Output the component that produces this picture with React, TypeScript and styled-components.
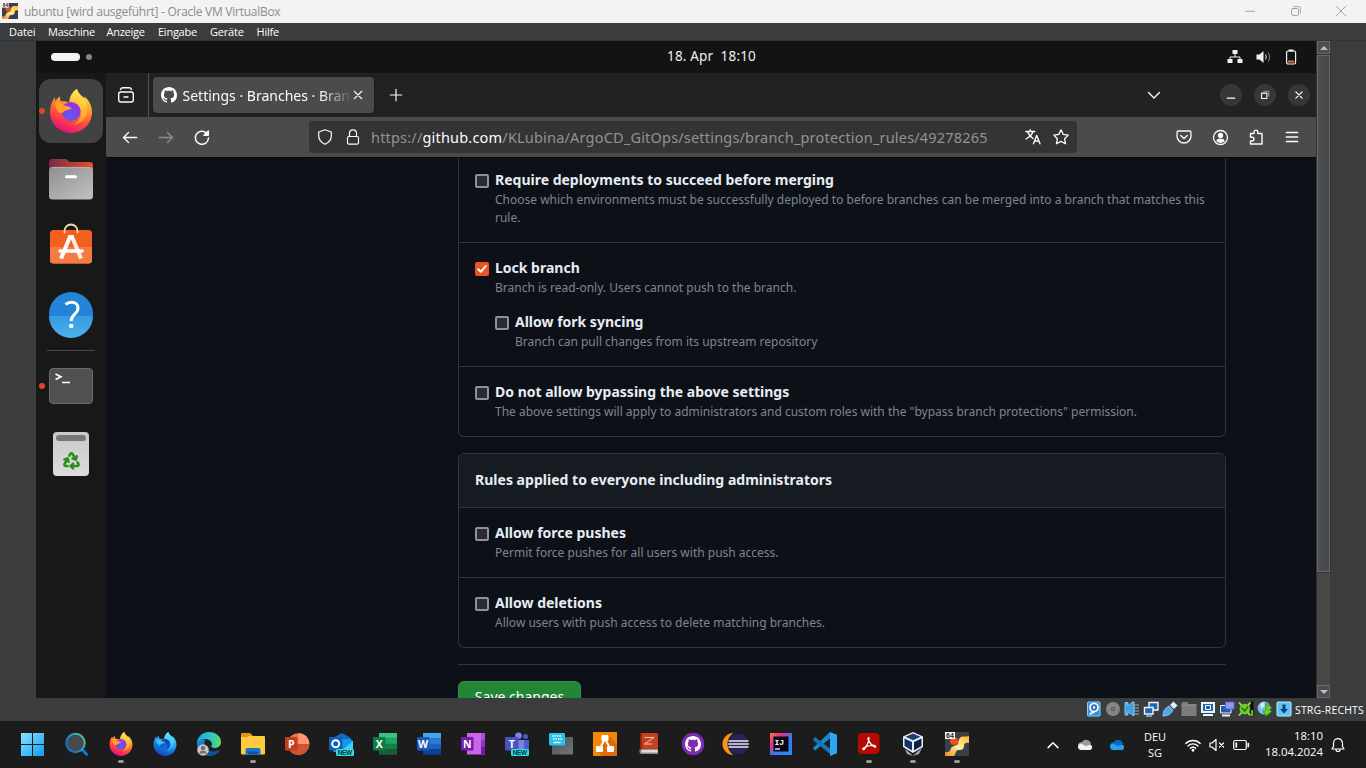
import React from 'react';
import styled, { createGlobalStyle, css } from 'styled-components';
import { Recycle } from 'lucide-react';

const ui = `'Noto Sans', 'Open Sans', sans-serif`;

const GlobalStyle = createGlobalStyle`
  * { box-sizing: border-box; }
  body { margin: 0; overflow: hidden; background: #1c1c1c; font-family: ${ui}; }
  svg { display: block; flex: none; overflow: visible; }
`;

/* Text whose natural width is nudged with letter spacing */
const Txt = styled.span<{ $ls?: number }>`
  white-space: pre;
  letter-spacing: ${(p) => p.$ls ?? 0}px;
`;

const Screen = styled.div`
  width: 1366px;
  height: 768px;
  display: flex;
  flex-direction: column;
  overflow: hidden;
  background: #3b3c3e;
`;

/* ---------- host window ---------- */

const TitleBar = styled.header`
  height: 23px;
  flex: none;
  display: flex;
  align-items: center;
  padding: 0 20px 2px 2px;
  background: #f3f3f3;
  color: #8c8c8c;
  font: 12px/16px 'Open Sans', sans-serif;
`;
const TitleText = styled(Txt)`
  margin: 3px auto 0 6px;
`;
const WindowButtons = styled.div`
  display: flex;
  gap: 35.5px;
`;

const MenuBar = styled.nav`
  height: 18px;
  flex: none;
  display: flex;
  padding-left: 9px;
  background: #3b3c3e;
  border-bottom: 1px solid #323335;
  color: #fff;
  font: 11px/18px 'Open Sans', sans-serif;
`;
const MenuItem = styled.span<{ $w: number; $ls: number }>`
  width: ${(p) => p.$w}px;
  letter-spacing: ${(p) => p.$ls}px;
  white-space: nowrap;
`;

const Body = styled.div`
  height: 657px;
  flex: none;
  display: flex;
  padding-left: 36px;
`;
const Guest = styled.div`
  width: 1280px;
  display: flex;
  flex-direction: column;
  overflow: hidden;
`;

const Scrollbar = styled.div`
  width: 14px;
  display: flex;
  flex-direction: column;
  background: #484848;
  border-left: 1px solid #313234;
`;
const ScrollButton = styled.div`
  height: 13px;
  display: grid;
  place-items: center;
  background: #4c4d4f;
  border: 1px solid #68696b;
`;
const ScrollThumb = styled.div`
  height: 517px;
  margin: 1px 0 auto;
  background: linear-gradient(90deg, #4e4f51, #47484a);
  border: 1px solid #68696b;
  box-shadow: 0 0 0 1px #313234;
`;

/* ---------- guest desktop ---------- */

const TopPanel = styled.div`
  height: 32px;
  flex: none;
  display: grid;
  grid-template-columns: 1fr auto 1fr;
  align-items: center;
  padding: 0 19px 0 15px;
  background: #131313;
  color: #f0f0f0;
  font: 13.5px/20px 'Noto Sans', sans-serif;
`;
const Clock = styled(Txt)`
  margin: -2px 0 0 75px;
`;
const Workspaces = styled.div`
  display: flex;
  align-items: center;
  gap: 6px;
`;
const Pill = styled.i<{ $active?: boolean }>`
  width: ${(p) => (p.$active ? 29 : 6)}px;
  height: ${(p) => (p.$active ? 8 : 6)}px;
  border-radius: 4px;
  background: ${(p) => (p.$active ? '#f4f4f4' : '#858585')};
`;
const SystemIcons = styled.div`
  display: flex;
  align-items: center;
  justify-content: flex-end;
  gap: 13px;
`;

const Desktop = styled.div`
  flex: 1;
  display: flex;
  min-height: 0;
`;
const Dock = styled.aside`
  width: 70px;
  flex: none;
  display: flex;
  flex-direction: column;
  align-items: center;
  padding-top: 6px;
  background: #181818;
`;
const DockItem = styled.div<{ $active?: boolean; $running?: boolean; $lift?: number }>`
  position: relative;
  width: 64px;
  height: 64px;
  margin-bottom: 4px;
  padding-bottom: ${(p) => p.$lift ?? 0}px;
  border-radius: 12px;
  display: grid;
  place-items: center;
  ${(p) => p.$active && css`background: #424242;`}
  ${(p) =>
    p.$running &&
    css`
      &::before {
        content: '';
        position: absolute;
        left: 0;
        top: 29px;
        width: 6px;
        height: 6px;
        border-radius: 3px;
        background: #d9481c;
      }
    `}
`;
const DockRule = styled.hr`
  width: 48px;
  height: 1px;
  margin: -1px 0 3px;
  border: 0;
  background: #4a4a4a;
`;
const Bin = styled.div`
  width: 36px;
  height: 44px;
  padding: 3px;
  display: flex;
  flex-direction: column;
  align-items: center;
  gap: 10px;
  border-radius: 4px;
  background: linear-gradient(#c9c9c9, #dcdcdc);
  color: #2b8f1e;
`;
const BinSlot = styled.i`
  width: 30px;
  height: 6px;
  border-radius: 3px;
  background: #777;
`;

/* ---------- browser ---------- */

const Browser = styled.section`
  flex: 1;
  display: flex;
  flex-direction: column;
  min-width: 0;
`;
const TabStrip = styled.div`
  height: 44px;
  flex: none;
  display: flex;
  align-items: center;
  padding-right: 6px;
  background: #222222;
  color: #fbfbfe;
`;
const TabOverview = styled.div`
  width: 43px;
  height: 44px;
  display: grid;
  place-items: center;
  padding-right: 2px;
  border-right: 1px solid #505050;
`;
const Tab = styled.div`
  width: 221px;
  height: 36px;
  margin: 0 14px 0 4px;
  padding: 0 11px 0 8px;
  display: flex;
  align-items: center;
  justify-content: space-between;
  border-radius: 4px;
  background: #4b4b4b;
  box-shadow: 0 0 3px rgba(0, 0, 0, 0.4);
`;
const TabTitle = styled.div`
  width: 166px;
  margin: 2px 0 0 1px;
  overflow: hidden;
  font: 14px/24px 'Noto Sans', sans-serif;
  mask-image: linear-gradient(90deg, #000 137px, transparent 170px);
`;
const TabActions = styled.div`
  margin-left: auto;
  display: flex;
  align-items: center;
`;
const RoundButton = styled.span`
  width: 22px;
  height: 22px;
  margin-left: 12px;
  border-radius: 50%;
  display: grid;
  place-items: center;
  background: #373737;
`;
const NavBar = styled.div`
  height: 40px;
  flex: none;
  display: flex;
  align-items: center;
  padding: 0 16px;
  background: #4b4b4b;
  color: #fbfbfe;
`;
const NavButtons = styled.div`
  display: flex;
  align-items: center;
  gap: 20px;
  width: 187px;
`;
const UrlBar = styled.div`
  width: 768px;
  height: 32px;
  display: flex;
  align-items: center;
  padding: 0 8px;
  gap: 12px;
  border-radius: 4px;
  background: #343434;
`;
const Url = styled.div`
  flex: 1;
  white-space: nowrap;
  margin: -1px 0 0 -2px;
  color: #929293;
  font: 14.5px/22px 'Noto Sans', sans-serif;
  b { font-weight: 400; color: #fbfbfe; }
`;
const NavTools = styled.div`
  margin-left: auto;
  display: flex;
  gap: 20px;
`;

/* ---------- page ---------- */

const Page = styled.main`
  flex: 1;
  min-height: 0;
  overflow: hidden;
  padding-left: 352px;
  background: #0d1117;
  border-top: 1px solid #08090f;
  color: #e6edf3;
  font: 14px/21px 'Noto Sans', sans-serif;
`;
const Panel = styled.section<{ $continued?: boolean }>`
  width: 768px;
  border: 1px solid #30363d;
  border-radius: 6px;
  overflow: hidden;
  margin-bottom: 16px;
  ${(p) =>
    p.$continued &&
    css`
      border-top: 0;
      border-radius: 0 0 6px 6px;
    `}
`;
const PanelHeader = styled.h3`
  margin: 0;
  height: 53px;
  padding: 15px 16px;
  background: #161b22;
  font: 700 14px/21px 'Noto Sans', sans-serif;
  letter-spacing: 0.02px;
`;
const RuleBox = styled.div<{ $first?: boolean }>`
  padding: ${(p) => (p.$first ? 12 : 15)}px 16px 15px;
  ${(p) => !p.$first && css`border-top: 1px solid #30363d;`}
`;
const Setting = styled.div<{ $nested?: boolean }>`
  display: flex;
  gap: 6px;
  ${(p) => p.$nested && css`margin: 15px 0 0 20px;`}
`;
const Check = styled.span<{ $on?: boolean }>`
  width: 14px;
  height: 14px;
  flex: none;
  margin-top: 4px;
  border-radius: 2px;
  border: 2px solid ${(p) => (p.$on ? '#e95420' : '#8f8f9d')};
  background: ${(p) => (p.$on ? '#e95420' : '#2b2a33')};
`;
const SettingName = styled.div`
  margin-bottom: 2px;
  font-weight: 700;
  line-height: 19px;
`;
const SettingNote = styled.div`
  color: #7d8590;
  font-size: 12px;
  line-height: 18px;
`;
const Divider = styled.hr`
  width: 768px;
  height: 1px;
  margin: 0 0 16px;
  border: 0;
  background: #30363d;
`;
const SaveButton = styled.button`
  width: 123px;
  height: 32px;
  padding: 0;
  border: 1px solid #38914a;
  border-radius: 6px;
  background: #238636;
  color: #fff;
  font: 400 14px/20px 'Noto Sans', sans-serif;
`;

/* ---------- status bar and taskbar ---------- */

const StatusBar = styled.div`
  height: 23px;
  flex: none;
  display: flex;
  align-items: center;
  justify-content: flex-end;
  gap: 3px;
  padding: 0 1px 2px 0;
  color: #fff;
  font: 10.5px/16px 'Open Sans', sans-serif;
`;
const HostKey = styled.span`
  width: 70px;
  padding-top: 3px;
  white-space: nowrap;
  letter-spacing: 0.15px;
`;
const Taskbar = styled.footer`
  height: 47px;
  flex: none;
  display: flex;
  padding-left: 11px;
  background: #1c1c1c;
  color: #fff;
  font: 11px/16px 'Open Sans', sans-serif;
`;
const TaskItem = styled.div<{ $running?: boolean }>`
  position: relative;
  width: 44px;
  display: grid;
  place-items: center;
  padding-bottom: 1px;
  ${(p) =>
    p.$running &&
    css`
      &::after {
        content: '';
        position: absolute;
        left: 19px;
        top: 39px;
        width: 6px;
        height: 3px;
        border-radius: 2px;
        background: #979797;
      }
    `}
`;
const Tray = styled.div`
  flex: 1;
  display: flex;
  align-items: center;
  padding-left: 68px;
`;
const TrayGroup = styled.div<{ $ml: number; $gap?: number }>`
  display: flex;
  align-items: center;
  margin-left: ${(p) => p.$ml}px;
  gap: ${(p) => p.$gap ?? 0}px;
`;
const TrayText = styled.div<{ $w: number; $ml: number; $align: string; $size?: number; $lift?: number }>`
  width: ${(p) => p.$w}px;
  margin-left: ${(p) => p.$ml}px;
  padding-bottom: ${(p) => p.$lift ?? 0}px;
  text-align: ${(p) => p.$align};
  font-size: ${(p) => p.$size ?? 11}px;
  white-space: nowrap;
`;

/* ---------- drawings ---------- */

type Kids = { children: React.ReactNode };
const Line = ({ s = 16, w = 1.2, c = 'currentColor', children }: Kids & { s?: number; w?: number; c?: string }) => (
  <svg width={s} height={s} viewBox="0 0 16 16" fill="none" stroke={c} strokeWidth={w} strokeLinecap="round" strokeLinejoin="round">
    {children}
  </svg>
);
const App24 = ({ children }: Kids) => (
  <svg width="24" height="24" viewBox="0 0 24 24">{children}</svg>
);
const Glyph16 = ({ children }: Kids) => (
  <svg width="16" height="16" viewBox="0 0 16 16">{children}</svg>
);

const catPath =
  'M8 0C3.58 0 0 3.58 0 8c0 3.54 2.29 6.53 5.47 7.59.4.07.55-.17.55-.38 0-.19-.01-.82-.01-1.49-2.01.37-2.53-.49-2.69-.94-.09-.23-.48-.94-.82-1.13-.28-.15-.68-.52-.01-.53.63-.01 1.08.58 1.23.82.72 1.21 1.87.87 2.33.66.07-.52.28-.87.51-1.07-1.78-.2-3.64-.89-3.64-3.95 0-.87.31-1.59.82-2.15-.08-.2-.36-1.02.08-2.12 0 0 .67-.21 2.2.82.64-.18 1.32-.27 2-.27s1.36.09 2 .27c1.53-1.04 2.2-.82 2.2-.82.44 1.1.16 1.92.08 2.12.51.56.82 1.27.82 2.15 0 3.07-1.87 3.75-3.65 3.95.29.25.54.73.54 1.48 0 1.07-.01 1.93-.01 2.2 0 .21.15.46.55.38A8.01 8.01 0 0 0 16 8c0-4.42-3.58-8-8-8';

const Firefox = ({ id, w, h, blue }: { id: string; w: number; h: number; blue?: boolean }) => (
  <svg width={w} height={h} viewBox="0 0 42 44">
    <defs>
      <linearGradient id={`${id}a`} x1=".8" y1="0" x2=".4" y2="1">
        <stop offset="0" stopColor={blue ? '#5fe6ff' : '#fff44f'} />
        <stop offset=".35" stopColor={blue ? '#2fb4f5' : '#ffa42a'} />
        <stop offset=".7" stopColor={blue ? '#1479e0' : '#ff4a3a'} />
        <stop offset="1" stopColor={blue ? '#1248b8' : '#e3107e'} />
      </linearGradient>
      <linearGradient id={`${id}b`} x1=".6" y1="0" x2=".4" y2="1">
        <stop offset="0" stopColor={blue ? '#6feaff' : '#fff04c'} />
        <stop offset="1" stopColor={blue ? '#219cf0' : '#ff8a2c'} />
      </linearGradient>
      <radialGradient id={`${id}c`} cx=".45" cy=".75" r=".8">
        <stop offset="0" stopColor={blue ? '#1c6fe0' : '#5b5cf0'} />
        <stop offset="1" stopColor={blue ? '#0b3a9c' : '#a02be0'} />
      </radialGradient>
    </defs>
    <path fill={`url(#${id}a)`} d="M27 0c1 4 4 6.500 7 9 .5-.5.4-1 .3-1.500C39 11 42 17 42 23c0 12-9.500 21-21 21S0 34.500 0 23C0 18 1.200 13 5 8c0 2 .2 3 .6 4 1-2 2.500-3.500 4.400-4.500 0 2 .3 3.500 1 4.700 3-.2 6 .3 8 1.300C19.500 8 22 3 27 0z" />
    <path fill={`url(#${id}b)`} d="M27 0c1 5 5 7 8 11 4 7 3 17-4 22-2 1.500-5 2.500-7 2.500 5-3 7-7 7-12 0-6-5-10-11-10C19.500 8 22 3 27 0z" />
    <circle cx="21" cy="22.500" r="9.500" fill={`url(#${id}c)`} />
    <path fill={blue ? '#35c4f8' : '#ffa02c'} d="M5 14c3-1.500 6-.5 8.500 2.500 2.500.5 6 .8 8 2.500-1.500 2-4.500 2-6.500 2.800-1.500 1-2.200 2-3.500 2.500C8 23.500 5 19 5 14z" />
  </svg>
);

const Puzzle64 = ({ s }: { s: number }) => (
  <svg width={s} height={s} viewBox="0 0 24 24">
    <defs>
      <linearGradient id={`pz${s}`} x1="1" y1="0" x2="0" y2="1">
        <stop offset="0" stopColor="#ffb32c" />
        <stop offset=".5" stopColor="#fff0a0" />
        <stop offset="1" stopColor="#f08a1c" />
      </linearGradient>
    </defs>
    <path fill="#3a3f4b" d="M0 0h24v24H0z" />
    <circle cx="9" cy="9" r="4" fill="#e8531b" />
    <path fill="#e8731b" d="M12 10l3-2-1 5z" />
    <path fill={`url(#pz${s})`} d="M24 4v7c-4-1-5 1-5 3 0 4-3 4-6 4-3 1-2 4-4 6H0v-4c4 1 5-1 6-4 1-2 5-2 7-4 1-2 0-5 3-7 2-1 5 0 8-1z" />
    <path fill="#f4f4f4" d="M0 0h10v7H0z" />
    <text x="1" y="6" fontSize="7" fontWeight="700" fontFamily="Liberation Sans, sans-serif" fill="#222" textLength="8">64</text>
  </svg>
);

const OfficeIcon = ({ letter, tile, stripes }: { letter: string; tile: string; stripes: string[] }) => (
  <App24>
    {stripes.map((c, i) => (
      <rect key={c} x="6" y={1 + i * 5.4} width="18" height={5.6} fill={c} />
    ))}
    <rect y="5" width="12.500" height="13.500" rx="1" fill={tile} />
    <text x="6.200" y="15.600" textAnchor="middle" fontSize="10.500" fontWeight="700" fontFamily="Open Sans, sans-serif" fill="#fff">{letter}</text>
  </App24>
);

const NewBadge = ({ x = 6 }: { x?: number }) => (
  <>
    <rect x={x} y="17" width="18" height="7" rx="1.500" fill="#2fe0e6" />
    <text x={x + 1.8} y="23" fontSize="6.500" fontWeight="700" fontFamily="Liberation Sans, sans-serif" fill="#06363a" textLength="14.400">NEW</text>
  </>
);

const Files = () => (
  <svg width="44" height="41" viewBox="0 0 44 41">
    <defs>
      <linearGradient id="fl1"><stop offset="0" stopColor="#77284f" /><stop offset="1" stopColor="#e8511f" /></linearGradient>
      <linearGradient id="fl2" x2=".8" y2="1"><stop offset="0" stopColor="#8f8f8f" /><stop offset="1" stopColor="#bdbdbd" /></linearGradient>
    </defs>
    <path fill="url(#fl1)" d="M0 3a3 3 0 0 1 3-3h14l4 3h20a3 3 0 0 1 3 3v10H0z" />
    <rect y="8" width="44" height="32.500" rx="3.500" fill="url(#fl2)" />
    <path stroke="#b8b8b8" strokeWidth=".8" d="M3 8.400h38" />
    <path stroke="#fff" strokeWidth="3" strokeLinecap="round" d="M17.500 17.700h9" />
  </svg>
);
const Store = () => (
  <svg width="42" height="48" viewBox="0 0 42 48">
    <rect y="7" width="42" height="33.500" rx="3.500" fill="#f2601f" />
    <path fill="#f67a44" d="M0 24h42v13a3.500 3.500 0 0 1-3.500 3.500h-35A3.500 3.500 0 0 1 0 37z" />
    <path fill="none" stroke="#f5dcae" strokeWidth="1.800" strokeLinecap="round" d="M14.500 9.500V8a6.500 6.500 0 0 1 13 0v1.500" />
    <g stroke="#fff" strokeLinecap="round" fill="none">
      <path strokeWidth="4" strokeLinecap="butt" d="M20.500 12.500L11 35.500" />
      <path strokeWidth="4" strokeLinecap="butt" stroke="#fdeee6" d="M21.500 12.500L31 35.500" />
      <path strokeWidth="4" strokeLinecap="butt" d="M18.500 14h5" />
      <path strokeWidth="3.600" d="M10 28h22" />
    </g>
  </svg>
);
const Help = () => (
  <svg width="44" height="44" viewBox="0 0 44 44">
    <defs><linearGradient id="hp" x2="0" y2="1"><stop offset="0" stopColor="#349ce2" /><stop offset="1" stopColor="#4db0ea" /></linearGradient></defs>
    <circle cx="22" cy="22" r="22" fill="#2384d8" />
    <path fill="url(#hp)" d="M0 24h44a22 22 0 0 1-44 0z" />
    <path fill="none" stroke="#fff" strokeWidth="3" d="M16.500 12.500C18 11 20 10.300 22.500 10.300c4 0 6.500 2.200 6.500 5.700 0 3-1.500 4.500-3.500 6.300-2.200 2-3.300 3.200-3.300 6.700" />
    <circle cx="22.200" cy="34" r="2.300" fill="#fff" />
  </svg>
);
const TerminalIcon = () => (
  <svg width="44" height="36" viewBox="0 0 44 36">
    <rect x=".5" y=".5" width="43" height="35" rx="3.500" fill="#505050" stroke="#6a6a6a" />
    <path fill="none" stroke="#fff" strokeWidth="1.600" d="M6.500 6l5.500 2.700L6.500 11.500M13 14.500h8" />
  </svg>
);

const SettingRow = ({ name, note, on, nested }: { name: string; note: string; on?: boolean; nested?: boolean }) => (
  <Setting $nested={nested}>
    <Check $on={on}>
      {on && (
        <svg width="10" height="10" viewBox="0 0 10 10" fill="none" stroke="#fff" strokeWidth="1.900" strokeLinecap="round" strokeLinejoin="round">
          <path d="M1.200 5.300l2.600 2.500L8.800 2" />
        </svg>
      )}
    </Check>
    <div>
      <SettingName>{name}</SettingName>
      <SettingNote>{note}</SettingNote>
    </div>
  </Setting>
);

const menu = [
  { t: 'Datei', w: 39, ls: -0.1 },
  { t: 'Maschine', w: 58.5, ls: -0.25 },
  { t: 'Anzeige', w: 51.5, ls: -0.25 },
  { t: 'Eingabe', w: 52, ls: -0.25 },
  { t: 'Geräte', w: 46.5, ls: -0.2 },
  { t: 'Hilfe', w: 30, ls: -0.2 },
];

const tasks: { icon: React.ReactNode; running?: boolean }[] = [
  {
    icon: (
      <App24>
        <defs><linearGradient id="win" x2="1" y2="1"><stop offset="0" stopColor="#8be2ff" /><stop offset="1" stopColor="#0f9cf4" /></linearGradient></defs>
        <path fill="url(#win)" d="M0 1h11v11H0zM12 1h11v11H12zM0 13h11v11H0zM12 13h11v11H12z" />
      </App24>
    ),
  },
  {
    icon: (
      <App24>
        <defs><linearGradient id="sr" x1="1" y1="0" x2="0" y2=".7"><stop offset="0" stopColor="#55d68c" /><stop offset=".5" stopColor="#2a9bc0" /><stop offset="1" stopColor="#0f6fc9" /></linearGradient></defs>
        <path stroke="#0f78d0" strokeWidth="2.800" strokeLinecap="round" d="M17.500 18l4.200 4.500" />
        <circle cx="10.500" cy="11" r="9.200" fill="#47494b" stroke="url(#sr)" strokeWidth="2" />
      </App24>
    ),
  },
  { icon: <Firefox id="t1" w={24} h={24} />, running: true },
  { icon: <Firefox id="t2" w={24} h={24} blue /> },
  {
    icon: (
      <App24>
        <defs>
          <linearGradient id="ed1"><stop offset="0" stopColor="#1fa6e8" /><stop offset=".6" stopColor="#2fc6c4" /><stop offset="1" stopColor="#62dc5c" /></linearGradient>
          <linearGradient id="ed2" x2=".6" y2="1"><stop offset="0" stopColor="#1b8bd8" /><stop offset="1" stopColor="#114f94" /></linearGradient>
        </defs>
        <path fill="url(#ed2)" d="M0 12c0-4 5-6 9-4-3 2-2 9 4 11 4 1 7 0 10-1-2 4-6 6-11 6C5 24 0 19 0 12z" />
        <path fill="url(#ed1)" d="M0 12C0 5 5 0 12 0s12 4.500 12 10c0 4-3 6-6.500 6-2.500 0-4-1-3-2.500C16 11 13 7 8.500 7 4 7 1 9 0 12z" />
        <path fill="#1c2226" d="M9.500 10.500c1.500-2.500 5.500-1 5 2-.3 1-.8 1.500-.4 2.200 1 1.500 4 1.700 7 .8-3 4-11 3-11.600-5z" />
        <circle cx="6" cy="18" r="5.800" fill="#c9c5c2" /><circle cx="6" cy="16" r="2.300" fill="#77716d" /><path fill="#77716d" d="M2 21.500c1-4 7-4 8 0z" />
      </App24>
    ),
  },
  {
    icon: (
      <App24>
        <path fill="#e0a012" d="M0 3a2 2 0 0 1 2-2h7l3 3v3H0z" />
        <rect y="4" width="24" height="18.500" rx="1" fill="#fdcb3d" /><path fill="#d99c10" d="M0 1.500h9L7 5H0z" />
        <path fill="#1677c7" d="M4.500 18a2 2 0 0 1 2-2h11a2 2 0 0 1 2 2v4.500h-15z" /><path fill="#0c559d" d="M7 19.500h10v3H7z" />
      </App24>
    ),
    running: true,
  },
  {
    icon: (
      <App24>
        <circle cx="13.500" cy="12" r="10.800" fill="#ec7a55" /><path fill="#ff9573" d="M13.500 1.200A10.800 10.800 0 0 1 24.300 12H13.500z" /><path fill="#d35230" d="M2.700 12h21.600a10.800 10.800 0 0 1-21.600 0z" />
        <rect y="5" width="12.500" height="13.500" rx="1" fill="#c43e1c" />
        <text x="6.200" y="15.600" textAnchor="middle" fontSize="10.500" fontWeight="700" fontFamily="Open Sans, sans-serif" fill="#fff">P</text>
      </App24>
    ),
  },
  {
    icon: (
      <App24>
        <path fill="#1769bd" d="M4 6l9-5 9 5v14H4z" /><path fill="#0c9df0" d="M7 7h14l3 2v11H5z" /><path fill="#52c8f8" d="M24 9v12H10z" />
        <rect y="5" width="13.500" height="13.500" rx="1" fill="#0f5fb8" />
        <circle cx="6.700" cy="11.700" r="3.500" fill="none" stroke="#fff" strokeWidth="2" />
        <NewBadge x={7} />
      </App24>
    ),
  },
  { icon: <OfficeIcon letter="X" tile="#107c41" stripes={['#33c481', '#21a366', '#108043', '#185c37']} /> },
  { icon: <OfficeIcon letter="W" tile="#185abd" stripes={['#41a5ee', '#2b7cd3', '#1c62c4', '#103f91']} /> },
  {
    icon: (
      <App24>
        <path fill="#ca64ea" d="M6 1h18v21.500H6z" /><path fill="#ae4bd5" d="M20 1h4v7h-4z" /><path fill="#9332bf" d="M20 8h4v7h-4z" /><path fill="#7719aa" d="M20 15h4v7.500h-4z" />
        <rect y="5" width="12.500" height="13.500" rx="1" fill="#7719aa" />
        <text x="6.200" y="15.600" textAnchor="middle" fontSize="10.500" fontWeight="700" fontFamily="Open Sans, sans-serif" fill="#fff">N</text>
      </App24>
    ),
  },
  {
    icon: (
      <App24>
        <circle cx="13.500" cy="3.800" r="3.300" fill="#7b83eb" /><circle cx="20.500" cy="4.500" r="2.500" fill="#5059c9" />
        <path fill="#5059c9" d="M16 8h8v8c0 3-4 4-6 3z" /><path fill="#7b83eb" d="M8 8h11v12H8z" />
        <rect y="5" width="13.500" height="13.500" rx="1" fill="#4b53bc" />
        <text x="6.800" y="15.600" textAnchor="middle" fontSize="10.500" fontWeight="700" fontFamily="Open Sans, sans-serif" fill="#fff">T</text>
        <NewBadge x={6} />
      </App24>
    ),
  },
  {
    icon: (
      <App24>
        <defs><linearGradient id="kb" x2="1" y2="1"><stop offset="0" stopColor="#4a5055" /><stop offset="1" stopColor="#70767a" /></linearGradient></defs>
        <path fill="url(#kb)" d="M3 5h21v17.500H3z" /><rect width="16" height="12.500" y="1" rx="1" fill="#27c3e8" />
        <path stroke="#fff" strokeWidth="1.300" strokeDasharray="1.500 1" d="M3 4h10M4 7h9" /><path stroke="#fff" strokeWidth="1.300" d="M4.500 10.500h7" />
      </App24>
    ),
  },
  {
    icon: (
      <App24>
        <path fill="#f08705" d="M0 0h24v24H0z" /><path fill="#df6c0c" d="M15 3l9 9v12H9l-5-5z" />
        <path stroke="#fff" strokeWidth="1.800" fill="none" d="M12 7L7 16M12 7l5 9" /><rect x="8.500" y="3" width="7" height="6" rx="1" fill="#fff" /><rect x="3" y="14" width="7" height="6" rx="1" fill="#fff" /><rect x="14" y="14" width="7" height="6" rx="1" fill="#fff" />
      </App24>
    ),
  },
  {
    icon: (
      <App24>
        <path fill="#8d8d8d" d="M2.500 17h18.500v5H4.500a2 2 0 0 1-2-2z" /><path fill="#ddd" d="M4.500 18h16v2.500h-16z" />
        <path fill="#c5401f" d="M3 1h16.500A1.500 1.500 0 0 1 21 2.500V17H5a2 2 0 0 0-2 1z" /><path fill="#8d2711" d="M3 1h2v16l-2 1z" />
        <path stroke="#f7c3b2" strokeWidth="1" fill="none" d="M7.500 5.500h9.500l-9.500 6.500h7.500" />
      </App24>
    ),
  },
  {
    icon: (
      <App24>
        <circle cx="12" cy="12" r="11.300" fill="#7d2bb0" /><g transform="translate(4 4)"><path fill="#fff" d={catPath} /></g>
      </App24>
    ),
  },
  {
    icon: (
      <App24>
        <path fill="#f7941e" d="M8.500 1A11 11 0 0 0 8.500 23 13 13 0 0 1 8.500 1z" /><circle cx="13.500" cy="12" r="10.300" fill="#2c2255" />
        <path stroke="#e8e8f0" strokeWidth="1.700" d="M3.500 9h20M3.200 12h20.600M3.500 15h20" />
      </App24>
    ),
  },
  {
    icon: (
      <App24>
        <defs><linearGradient id="ij" x2="1" y2="1"><stop offset="0" stopColor="#fd7a3a" /><stop offset=".3" stopColor="#e62d88" /><stop offset=".55" stopColor="#3a78f2" /><stop offset="1" stopColor="#2a8cf8" /></linearGradient></defs>
        <path fill="url(#ij)" d="M1 1h22v22H1z" /><path fill="#0a0510" d="M4.500 4.500h15v15h-15z" />
        <text x="5.500" y="12.500" fontSize="8" fontWeight="700" fontFamily="Liberation Mono, monospace" fill="#fff">IJ</text>
        <path stroke="#fff" strokeWidth="1.300" d="M6 17h5" />
      </App24>
    ),
  },
  {
    icon: (
      <App24>
        <path fill="#1b86c9" d="M17 0L1 15l-1 1.500 2 2L17 6.500z" /><path fill="#1177b8" d="M0 7l2-2 17 13v5.500L1 9z" /><path fill="#2aa8f2" d="M17 0l7 2.700v18.600L17 24z" />
      </App24>
    ),
  },
  {
    icon: (
      <App24>
        <rect x="1" y="1" width="21.500" height="21" rx="4" fill="#b30b00" />
        <path fill="none" stroke="#fff" strokeWidth="1.300" d="M11.500 5.500c-1.500.5.500 6 6 9.500 1.500.8 1.500-1.300-.5-1.500-4-.2-8 .8-10.500 2.500-1.500 1.200 0 2.500 1.500.3 2-3 3.800-7 4-9.500 0-.9-.2-1.300-.5-1.300z" />
      </App24>
    ),
    running: true,
  },
  {
    icon: (
      <App24>
        <path fill="#9aa4b5" d="M4 17l4 3 4 4 4-4 5-4-3 6-6 2-6-2z" /><path fill="#e8eef6" d="M12 0l10 4.500V15l-10 6L2 15V4.500z" />
        <path fill="#1c3d72" d="M12 1.500l7.500 3.300L12 8.300 4.500 4.800z" /><path fill="#14315f" d="M3.500 6.500l7.500 3.600v8.400l-7.500-4.500z" /><path fill="#0d2144" d="M20.500 6.500L13 10.100v8.400l7.500-4.500z" />
      </App24>
    ),
    running: true,
  },
  { icon: <Puzzle64 s={24} />, running: true },
];

const statusIcons = [
  <Glyph16><rect x="1.500" y="1" width="12.500" height="14" rx="1" fill="#2f93e0" stroke="#8ad2fa" /><circle cx="8" cy="6.500" r="4" fill="#3a6fb0" stroke="#fff" strokeWidth="1.700" /><circle cx="8" cy="6.500" r="1.200" fill="#fff" /><path stroke="#fff" strokeWidth="1.700" d="M3.500 13l5-2" /></Glyph16>,
  <Glyph16><circle cx="8" cy="8" r="7" fill="#858585" /><circle cx="8" cy="8" r="2" fill="#4d4d4d" /><circle cx="8" cy="8" r=".8" fill="#bbb" /></Glyph16>,
  <Glyph16><path stroke="#68727a" strokeWidth="5" strokeDasharray="2 1" d="M12.500 3v12" /><path fill="#3da2ea" stroke="#a6dcfb" strokeWidth=".8" d="M1 1.500h3V5L8.500 1h1.500v13.500H8.500L4 10.500V14H1z" /></Glyph16>,
  <Glyph16><path fill="#1f66b8" stroke="#eaf4fc" strokeWidth="1.400" d="M6 1.500h9V9H6z" /><path fill="#1f66b8" stroke="#eaf4fc" strokeWidth="1.400" d="M1.500 6.500h8.500V13H1.500z" /><path stroke="#eaf4fc" d="M3 15h6" /></Glyph16>,
  <Glyph16><path fill="#4aa9ee" stroke="#a3dbfb" strokeWidth=".7" d="M1 15c0-5 2-8 6-10l4 4c-2 4-5 6-10 6z" /><path fill="#e6eef5" d="M8 4l3.500-3.500L15.500 4.500 12 8z" /></Glyph16>,
  <Glyph16><path fill="#7c7c7c" d="M.5 3l1-2h5l1 2h8v12H.5z" /><path fill="#8a8a8a" d="M.5 3.500h15V5H.5z" /></Glyph16>,
  <Glyph16><path fill="#eaf4fc" d="M1 1h14v11H1zM3 13h10v2H3z" /><path fill="#1e62b2" d="M3 3h10v7H3z" /><path fill="none" stroke="#fff" d="M5.500 4.500h5v4h-5z" /></Glyph16>,
  <Glyph16><path fill="#1f5fae" stroke="#eaf4fc" d="M1.500 4.500H12V12H1.500z" /><path fill="#8b9af5" stroke="#5567d6" d="M6.500 1H15v7H6.500z" /><path stroke="#eaf4fc" strokeWidth="2" d="M3 14.500h8" /></Glyph16>,
  <Glyph16><path fill="#0b0b0b" d="M12.500.5H15.500v15h-3z" /><path fill="#65c51c" d="M13.200 9h1.800v6h-1.800z" /><path stroke="#9ae64c" strokeWidth="1.800" d="M1 1.500l11.500 13M12.500 1.500L1 14.500" /><circle cx="6.800" cy="8" r="5.200" fill="#6fcf24" /><path stroke="#2d6f0b" strokeWidth="1.500" fill="none" d="M3.500 6.500l3 3.500L10 5.500" /></Glyph16>,
  <Glyph16><circle cx="7" cy="7" r="6.500" fill="#6fc3ef" /><path fill="#c9ecfb" d="M3 3l4-2 1 4-4 3z" /><path fill="#6fd022" stroke="#2f7d08" strokeWidth=".7" d="M8.500 2.500l6.500 4-2.500 2.500 2.500 1.500-6 4.500-3-4.500 3-1.500z" /></Glyph16>,
  <Glyph16><rect x="1" y="1" width="14" height="14" rx="1" fill="#5cc4f5" stroke="#bfeaff" /><path fill="#0d3c78" d="M6.500 3.500h3V8H12l-4 4.500L4 8h2.500z" /></Glyph16>,
];

export default function App() {
  return (
    <>
      <GlobalStyle />
      <Screen>
        <TitleBar>
          <Puzzle64 s={16} />
          <TitleText $ls={-0.27}>ubuntu [wird ausgeführt] - Oracle VM VirtualBox</TitleText>
          <WindowButtons>
            <Line s={10} c="#8a8a8a"><path d="M1 8.500h14" /></Line>
            <Line s={10} c="#8a8a8a"><rect x="1" y="4" width="11" height="11" rx="2" /><path d="M4.500 1H12a3 3 0 0 1 3 3v7.500" /></Line>
            <Line s={10} c="#8a8a8a"><path d="M0 0l16 16M16 0L0 16" /></Line>
          </WindowButtons>
        </TitleBar>
        <MenuBar>
          {menu.map((m) => (
            <MenuItem key={m.t} $w={m.w} $ls={m.ls}>{m.t}</MenuItem>
          ))}
        </MenuBar>

        <Body>
          <Guest>
            <TopPanel>
              <Workspaces><Pill $active /><Pill /></Workspaces>
              <Clock $ls={0.16}>18. Apr  18:10</Clock>
              <SystemIcons>
                <Glyph16><path fill="#f0f0f0" d="M5.500 1h5v4h-5zM.5 10h5v4h-5zM10.500 10h5v4h-5z" /><path fill="none" stroke="#f0f0f0" d="M8 5v3M3 10V8h10v2" /></Glyph16>
                <Glyph16><path fill="#f0f0f0" d="M.5 5.500H3.500L7.500 2v12L3.500 10.500H.5z" /><path fill="none" stroke="#f0f0f0" d="M9.500 5.500q1.600 2.500 0 5" /><path fill="none" stroke="#8a8a8a" d="M12 3.500q3.300 4.500 0 9" /></Glyph16>
                <svg width="12" height="16" viewBox="0 0 12 16"><path fill="#f0f0f0" d="M3.500.5h5v2h-5z" /><rect x="1.600" y="2" width="9" height="13" rx="1.500" fill="none" stroke="#f0f0f0" strokeWidth="1.200" /><path fill="#ee6c2f" d="M3 11.500h6.200v2H3z" /></svg>
              </SystemIcons>
            </TopPanel>
            <Desktop>
              <Dock>
                <DockItem $active $running><Firefox id="dk" w={42} h={44} /></DockItem>
                <DockItem><Files /></DockItem>
                <DockItem><Store /></DockItem>
                <DockItem $lift={2}><Help /></DockItem>
                <DockRule />
                <DockItem $running><TerminalIcon /></DockItem>
                <DockItem>
                  <Bin><BinSlot /><Recycle size={19} strokeWidth={3.2} /></Bin>
                </DockItem>
              </Dock>

              <Browser>
                <TabStrip>
                  <TabOverview>
                    <Line w={1.4}><rect x=".7" y="5" width="14.600" height="10" rx="2" /><path d="M2.500 2.500Q3 .7 5 .7h6q2 0 2.500 1.800M6 10h4" /></Line>
                  </TabOverview>
                  <Tab>
                    <svg width="16" height="16" viewBox="0 0 16 16" fill="#fff"><path d={catPath} /></svg>
                    <TabTitle><Txt $ls={0}>Settings · Branches · Branch</Txt></TabTitle>
                    <Line s={10} w={1.7}><path d="M2 2l12 12M14 2L2 14" /></Line>
                  </Tab>
                  <Line><path d="M8 2.300v11.400M2.300 8h11.400" /></Line>
                  <TabActions>
                    <Line w={1.4}><path d="M2.500 5.500L8 11l5.500-5.500" /></Line>
                    <TrayGroup $ml={46}>
                      <RoundButton><Line s={10} w={1.8}><path d="M2 13h12" /></Line></RoundButton>
                      <RoundButton><Line s={10} w={1.7}><rect x="2.500" y="5" width="8.500" height="8.500" rx="0" /><path stroke="#999" d="M6 2h8v8" /></Line></RoundButton>
                      <RoundButton><Line s={10} w={2}><path d="M3 3l10 10M13 3L3 13" /></Line></RoundButton>
                    </TrayGroup>
                  </TabActions>
                </TabStrip>
                <NavBar>
                  <NavButtons>
                    <Line w={1.4}><path d="M14.700 8.500H1.500M6.500 3.500l-5 5 5 5" /></Line>
                    <Line w={1.4} c="#8b8b8b"><path d="M1.300 8.500h13.200M9.500 3.500l5 5-5 5" /></Line>
                    <Line w={1.5}><path d="M14.500 9A6.600 6.600 0 1 1 12.500 4" /><path fill="currentColor" d="M14.300 2v4.300H10z" /></Line>
                  </NavButtons>
                  <UrlBar>
                    <Line><path d="M8 .8L14.300 3v4c0 4-2.500 6.500-6.300 8.300C4.200 13.500 1.700 11 1.700 7V3z" /></Line>
                    <Line><rect x="2.500" y="7.500" width="11" height="7.700" rx="1.500" /><path d="M4.500 7.500V4.300a3.500 3.500 0 0 1 7 0v3.200" /></Line>
                    <Url><Txt $ls={0.19}>https://<b>github.com</b>/KLubina/ArgoCD_GitOps/settings/branch_protection_rules/49278265</Txt></Url>
                    <Line w={1.4}><path d="M.8 2.500h9M5.300.8v1.700M2.500 2.500C3.500 6 6 8 8 9.500M8 2.500C7 6 4.500 8 1 10M8.500 14.800l3.200-8.300 3.300 8.300M9.600 12h4.200" /></Line>
                    <Line w={1.3}><path d="M8 .8l2.200 4.600 5 .7-3.600 3.600.9 5.100L8 12.400l-4.500 2.400.9-5.100L.8 6.100l5-.7z" /></Line>
                  </UrlBar>
                  <NavTools>
                    <Line w={1.3}><path d="M2.500 2h11q1.500 0 1.500 1.500v3.500a7 7 0 0 1-14 0V3.500Q1 2 2.500 2zM4.800 6.500L8 9.500l3.200-3" /></Line>
                    <Line w={1.3}><circle cx="8.500" cy="8.500" r="7" /><circle cx="8.500" cy="6.500" r="2" fill="currentColor" /><path fill="currentColor" d="M5 12q.5-1.500 2-1.500h3q1.500 0 2 1.500-3.500 2.500-7 0z" /></Line>
                    <Line w={1.4}><path d="M2.500 4.500H6V3a1.900 1.900 0 0 1 3.800 0v1.500H14V15H2.500v-3h1.600a1.900 1.900 0 0 0 0-3.800H2.500z" /></Line>
                    <Line w={1.4}><path d="M2.300 3.500h11.400M2.300 8h11.400M2.300 12.500h11.400" /></Line>
                  </NavTools>
                </NavBar>
                <Page>
                  <Panel $continued>
                    <RuleBox $first>
                      <SettingRow name="Require deployments to succeed before merging" note="Choose which environments must be successfully deployed to before branches can be merged into a branch that matches this rule." />
                    </RuleBox>
                    <RuleBox>
                      <SettingRow on name="Lock branch" note="Branch is read-only. Users cannot push to the branch." />
                      <SettingRow nested name="Allow fork syncing" note="Branch can pull changes from its upstream repository" />
                    </RuleBox>
                    <RuleBox>
                      <SettingRow name="Do not allow bypassing the above settings" note={'The above settings will apply to administrators and custom roles with the "bypass branch protections" permission.'} />
                    </RuleBox>
                  </Panel>
                  <Panel>
                    <PanelHeader>Rules applied to everyone including administrators</PanelHeader>
                    <RuleBox>
                      <SettingRow name="Allow force pushes" note="Permit force pushes for all users with push access." />
                    </RuleBox>
                    <RuleBox>
                      <SettingRow name="Allow deletions" note="Allow users with push access to delete matching branches." />
                    </RuleBox>
                  </Panel>
                  <Divider />
                  <SaveButton>Save changes</SaveButton>
                </Page>
              </Browser>
            </Desktop>
          </Guest>
          <Scrollbar>
            <ScrollButton><svg width="8" height="4" viewBox="0 0 8 4"><path fill="#bdbdbd" d="M0 4l4-4 4 4z" /></svg></ScrollButton>
            <ScrollThumb />
            <ScrollButton><svg width="8" height="4" viewBox="0 0 8 4"><path fill="#bdbdbd" d="M0 0l4 4 4-4z" /></svg></ScrollButton>
          </Scrollbar>
        </Body>

        <StatusBar>
          {statusIcons.map((icon, i) => (
            <React.Fragment key={i}>{icon}</React.Fragment>
          ))}
          <HostKey>STRG-RECHTS</HostKey>
        </StatusBar>

        <Taskbar>
          {tasks.map((t, i) => (
            <TaskItem key={i} $running={t.running}>{t.icon}</TaskItem>
          ))}
          <Tray>
            <Line s={12} w={1.9}><path d="M1.500 11.500L8 5l6.500 6.500" /></Line>
            <TrayGroup $ml={18} $gap={16}>
              <svg width="16" height="12" viewBox="0 0 16 12"><path fill="#9b9b9b" d="M1 6a4 4 0 0 1 4-3 5 5 0 0 1 9 2l-5 4z" /><path fill="#f1f1f1" d="M3.500 11A3.300 3.300 0 0 1 3 4.700q1.500-.2 3 .8l3 1.800 4-1.800a2.900 2.900 0 0 1 .4 5.500z" /></svg>
              <svg width="16" height="12" viewBox="0 0 16 12"><path fill="#0b67c2" d="M1 6a4 4 0 0 1 4-3 5 5 0 0 1 9 2l-5 4z" /><path fill="#27a0ec" d="M3.500 11A3.300 3.300 0 0 1 3 4.700q1.500-.2 3 .8l3 1.800 4-1.800a2.900 2.900 0 0 1 .4 5.500z" /></svg>
            </TrayGroup>
            <TrayText $w={30} $ml={15} $align="center">DEU<br />SG</TrayText>
            <TrayGroup $ml={15} $gap={8}>
              <Line w={1.3}><path d="M.8 6.500a10.200 10.200 0 0 1 14.400 0M3 9a7 7 0 0 1 10 0M5.300 11.300a3.900 3.900 0 0 1 5.400 0" /><circle cx="8" cy="13.200" r=".8" fill="currentColor" /></Line>
              <Line><path d="M1 6h2l4-3.500v11L3 10H1zM10.500 6l4 4M14.500 6l-4 4" /></Line>
              <Line><rect x=".7" y="3.500" width="12.600" height="9" rx="1.500" /><path d="M15.300 6.500v3M3.300 6v4" strokeWidth="1.700" /></Line>
            </TrayGroup>
            <TrayText $w={60} $ml={14} $align="right" $size={11.4} $lift={2}>18:10<br />18.04.2024</TrayText>
            <TrayGroup $ml={7}>
              <Line><path d="M2 12h12l-1.500-2.500V6.200a4.500 4.500 0 0 0-9 0v3.300zM6 12.500a2 2 0 0 0 4 0" /></Line>
            </TrayGroup>
          </Tray>
        </Taskbar>
      </Screen>
    </>
  );
}
